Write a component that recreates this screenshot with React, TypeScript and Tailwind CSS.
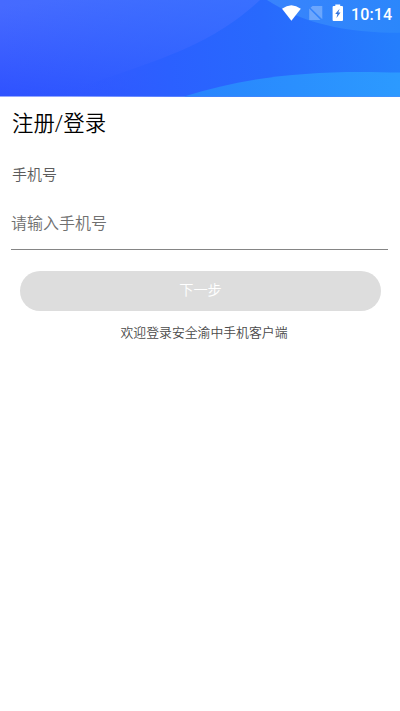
function Waves() {
  return (
    <svg className="absolute inset-0 h-full w-full" viewBox="0 0 400 97" preserveAspectRatio="none">
      <defs>
        <linearGradient id="base" gradientUnits="userSpaceOnUse" x1="60" y1="0" x2="70" y2="97">
          <stop offset="0" stopColor="#466aff" />
          <stop offset="1" stopColor="#2d50ff" />
        </linearGradient>
        <linearGradient id="tint" gradientUnits="userSpaceOnUse" x1="0" y1="0" x2="260" y2="0">
          <stop offset="0" stopColor="#3278ff" stopOpacity="0" />
          <stop offset="1" stopColor="#3278ff" stopOpacity="0.8" />
        </linearGradient>
        <linearGradient id="hill" gradientUnits="userSpaceOnUse" x1="70" y1="90" x2="400" y2="50">
          <stop offset="0" stopColor="#2f56ff" stopOpacity="0" />
          <stop offset="0.3" stopColor="#2b60ff" />
          <stop offset="0.6" stopColor="#2869fd" />
          <stop offset="1" stopColor="#247efc" />
        </linearGradient>
        <linearGradient id="corner" gradientUnits="userSpaceOnUse" x1="268" y1="0" x2="400" y2="30">
          <stop offset="0" stopColor="#3983fc" />
          <stop offset="1" stopColor="#2b87fb" />
        </linearGradient>
        <linearGradient id="front" gradientUnits="userSpaceOnUse" x1="185" y1="97" x2="400" y2="80">
          <stop offset="0" stopColor="#2884fd" />
          <stop offset="1" stopColor="#2c9aff" />
        </linearGradient>
      </defs>
      <rect width="400" height="97" fill="url(#base)" />
      <rect width="400" height="97" fill="url(#tint)" opacity="0.7" />
      <path d="M50 97 C115 76 155 62 183 50 C216 35 240 19 260 0 H400 V97Z" fill="url(#hill)" />
      <path d="M267 0 C304 24 346 33 400 33 V0Z" fill="url(#corner)" />
      <path d="M184 97 C250 76 315 70 400 73 V97Z" fill="url(#front)" />
    </svg>
  );
}

function StatusBar() {
  return (
    <div className="relative flex h-7 items-center pl-[281px]">
      <svg className="h-7 w-[70px] shrink-0" viewBox="281 0 70 28">
        <path d="M282 8.8 Q291.3 1.7 300.8 8.8 L291.4 20.8Z" fill="#fff" />
        <path d="M312.5 6 H322.3 V19.3 L310.5 7.8Z M309.2 8.4 L320.5 19.9 H309.2Z" fill="#fff" fillOpacity="0.28" />
        <path d="M335.3 6 V4.5 H340.2 V6 H342 Q343 6 343 7 V20 Q343 21 342 21 H333.6 Q332.6 21 332.6 20 V7 Q332.6 6 333.6 6Z" fill="#fff" />
        <path d="M339.6 8.7 L335.2 13.9 H337.4 L336.5 18 L340.5 12.6 H338.3Z" fill="#3475dc" />
      </svg>
      <span className="pt-0.5 font-[Roboto,sans-serif] text-[16px] font-medium leading-7 tracking-[0.1px] text-white">10:14</span>
    </div>
  );
}

export default function App() {
  return (
    <main className="h-[711px] w-[400px] overflow-hidden bg-white font-[Roboto,'Noto_Sans_CJK_SC',sans-serif] font-[350]">
      <header className="relative h-[96.5px] overflow-hidden">
        <Waves />
        <StatusBar />
      </header>
      <h1 className="mt-[11.5px] pl-3 text-[21.4px] font-[350] leading-8 text-black">注册/登录</h1>
      <form className="flex flex-col" onSubmit={(e) => e.preventDefault()}>
        <label htmlFor="phone" className="mt-[23px] pl-3 text-[15px] leading-6 text-[#5c5c5c]">手机号</label>
        <input
          id="phone"
          type="tel"
          placeholder="请输入手机号"
          className="ml-[11px] mt-[22px] mr-3 h-[41px] border-b border-[#858585] pb-[12px] text-[16px] leading-7 outline-none placeholder:text-[#707070]"
        />
        <button type="submit" className="ml-5 mr-[19px] mt-[21px] h-10 rounded-full bg-[#ddd] pb-[1px] text-[14.2px] text-white">
          下一步
        </button>
      </form>
      <p className="mt-3 pl-2 text-center text-[12.85px] leading-5 text-[#4a4a4a]">欢迎登录安全渝中手机客户端</p>
    </main>
  );
}
